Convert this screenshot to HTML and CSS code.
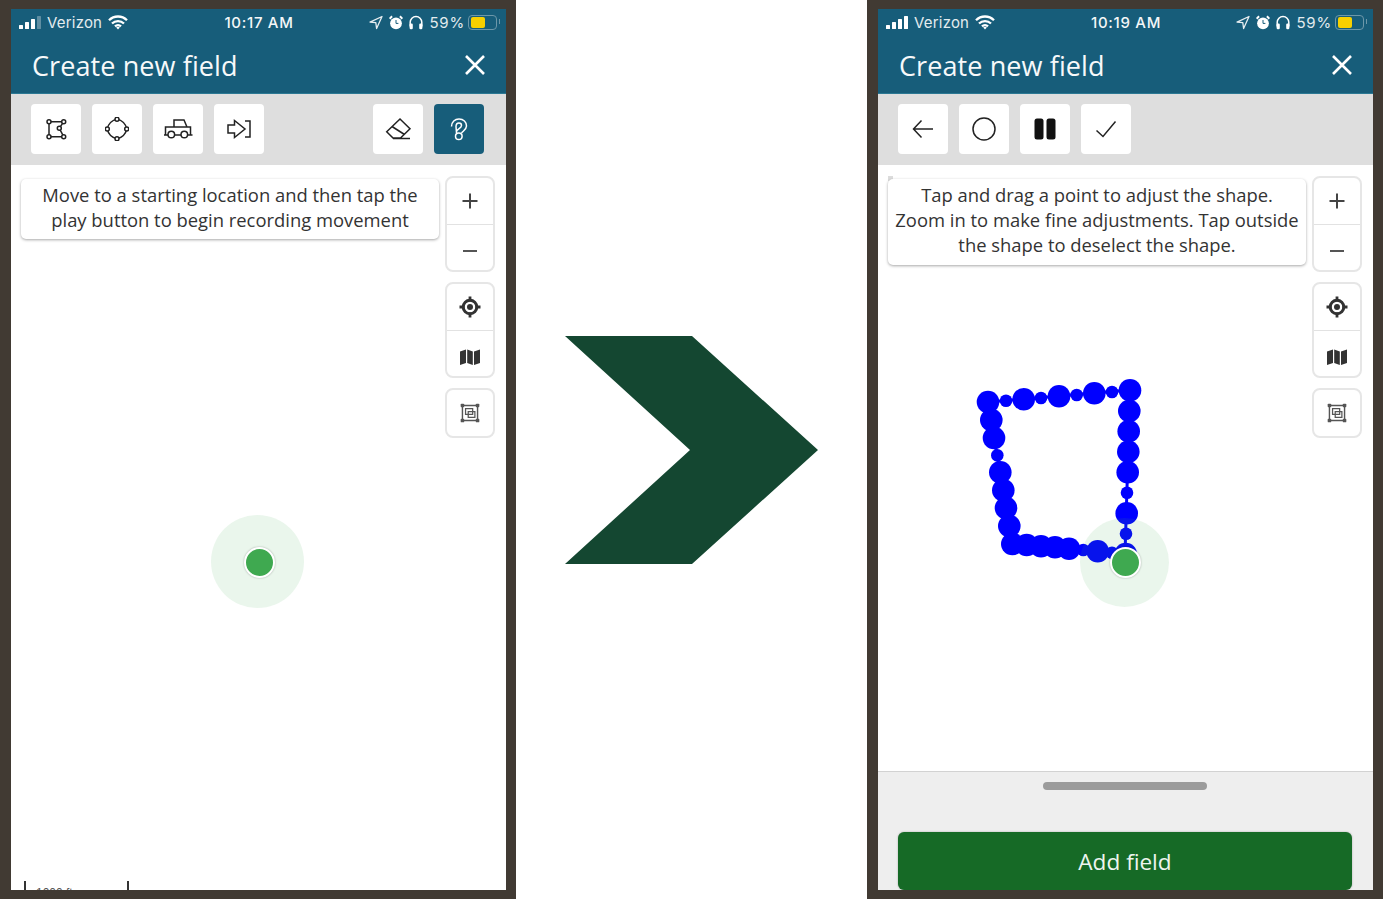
FILE: index.html
```html
<!DOCTYPE html>
<html lang="en">
<head>
<meta charset="utf-8">
<title>Create new field</title>
<link rel="stylesheet" href="styles.css">
</head>
<body>
<svg class="defs" aria-hidden="true">
  <defs>
    <symbol id="wifi" viewBox="0 0 20 15"><path d="M1 5.200a12.800 12.800 0 0 1 18 0M4 8.500a8.600 8.600 0 0 1 12 0M7 11.400a4.300 4.300 0 0 1 6 0" fill="none" stroke="#fff" stroke-width="2.300"/><path d="M8.200 12.600a2.600 2.600 0 0 1 3.600 0L10 14.600z" fill="#fff"/></symbol>
    <symbol id="nav" viewBox="0 0 14 14"><path d="M13 1 1 6.600l5.800.6.8 5.800z" fill="none" stroke="#e8eef1" stroke-width="1.300" stroke-linejoin="round"/></symbol>
    <symbol id="alarm" viewBox="0 0 14 14"><circle cx="7" cy="7.800" r="5.900" fill="#fff"/><path d="M7 4.500v3.400h2.400" fill="none" stroke="#175d7a" stroke-width="1"/><path d="M.6 3.200 3.100.8M13.400 3.200 10.900.8" stroke="#fff" stroke-width="2"/></symbol>
    <symbol id="phones" viewBox="0 0 14 14"><path d="M1.200 11V6.800a5.800 5.800 0 0 1 11.600 0V11" fill="none" stroke="#fff" stroke-width="1.500"/><rect x=".6" y="8" width="3.200" height="5.800" rx="1.300" fill="#fff"/><rect x="10.200" y="8" width="3.200" height="5.800" rx="1.300" fill="#fff"/></symbol>
    <symbol id="close" viewBox="0 0 22 22"><path d="M2 2 20 20M20 2 2 20" stroke="#fff" stroke-width="2.600" fill="none"/></symbol>
    <symbol id="plus" viewBox="-2 -2 24 24"><path d="M10 2.500v15M2.500 10h15" stroke="#444" stroke-width="2" fill="none"/></symbol>
    <symbol id="minus" viewBox="-2 -2 24 24"><path d="M3 10h14" stroke="#555" stroke-width="2" fill="none"/></symbol>
    <symbol id="locate" viewBox="0 0 24 24"><path d="M12 1.500v5M12 17.500v5M1.500 12h5M17.500 12h5" stroke="#333" stroke-width="2.800"/><circle cx="12" cy="12" r="6.800" fill="none" stroke="#333" stroke-width="3"/><circle cx="12" cy="12" r="3" fill="#333"/></symbol>
    <symbol id="map" viewBox="0 0 24 24"><path d="M2 6.500 8 4.500V18L2 20zM9.200 4.500l5.600 2V20l-5.600-2zM16 6.500l6-2V18l-6 2z" fill="#333"/></symbol>
    <symbol id="extent" viewBox="-1.500 -1.500 27 27"><path d="M3.500 3.500h17v17h-17z" fill="none" stroke="#555" stroke-width="1.600"/><path d="M7 7h8v6.500H7zM10 10.500h7.500V17H10z" fill="none" stroke="#555" stroke-width="1.400"/><g fill="#555"><rect x="1.500" y="1.500" width="4" height="4" rx="1"/><rect x="18.500" y="1.500" width="4" height="4" rx="1"/><rect x="1.500" y="18.500" width="4" height="4" rx="1"/><rect x="18.500" y="18.500" width="4" height="4" rx="1"/></g></symbol>
  </defs>
</svg>

<main class="layout">
  <section class="phone">
    <div class="screen">
      <header class="header">
        <div class="status">
          <div class="status-left">
            <span class="signal"><i></i><i></i><i></i><i class="off"></i></span>
            <span>Verizon</span>
            <svg class="wifi"><use href="#wifi"/></svg>
          </div>
          <div class="status-time">10:17 AM</div>
          <div class="status-right">
            <svg class="sys"><use href="#nav"/></svg>
            <svg class="sys"><use href="#alarm"/></svg>
            <svg class="sys"><use href="#phones"/></svg>
            <span class="pct">59%</span>
            <span class="battery"><b></b></span>
          </div>
        </div>
        <div class="titlebar">
          <h1>Create new field</h1>
          <svg class="close"><use href="#close"/></svg>
        </div>
      </header>
      <div class="toolbar">
        <button class="tool"><svg viewBox="0 0 24 24" class="ico"><path d="M5 4.700h14.700M5 4.700v15M5 19.700h14.700M19.700 4.700 15.300 11.300 19.700 19.700"/><circle cx="5" cy="4.700" r="2"/><circle cx="19.700" cy="4.700" r="2"/><circle cx="5" cy="19.700" r="2"/><circle cx="19.700" cy="19.700" r="2"/><circle cx="15.300" cy="11.300" r="2"/></svg></button>
        <button class="tool"><svg viewBox="0 0 24 24" class="ico"><path d="M2.300 12A12 12 0 0 1 12 2.300M12 2.300A12 12 0 0 1 21.700 12M21.700 12A12 12 0 0 1 12 21.700M12 21.700A12 12 0 0 1 2.300 12"/><circle cx="12" cy="2.300" r="2"/><circle cx="12" cy="21.700" r="2"/><circle cx="2.300" cy="12" r="2"/><circle cx="21.700" cy="12" r="2"/></svg></button>
        <button class="tool"><svg viewBox="0 0 30 24" class="ico wide"><path d="M1 18h4M11.500 18h6.500M24.500 18h5M2.500 18V10H11V3h10l3 7h3.500v8M11 10h13"/><circle cx="8.300" cy="17.500" r="3.300"/><circle cx="21.300" cy="17.500" r="3.300"/></svg></button>
        <button class="tool"><svg viewBox="0 0 30 24" class="ico wide"><path d="M4 8h6.500V3.500L21 12 10.500 20.500V16H4zM21 4h5v16h-5"/></svg></button>
        <span class="spacer"></span>
        <button class="tool"><svg viewBox="0 0 30 24" class="ico wide"><path d="M3.700 14.700 17 2l10 9.700-9.500 9.300H10zM9 9.500l12.500 8M10 21.500h17"/></svg></button>
        <button class="tool active"><svg viewBox="0 0 24 24" class="ico light"><path d="M4.500 9.500C4.500 5 8 2 12 2c4.500 0 7.500 3 7.500 7 0 3.500-3.500 5-5 7M9.500 16v-1.500c0-2.500 5-3 5-6C14.500 7 13.500 6 12 6s-3 1-3 3.500z"/><circle cx="11.800" cy="19.300" r="3.300"/></svg></button>
      </div>
      <div class="map">
        <div class="overlay">
          <div class="hint">Move to a starting location and then tap the play button to begin recording movement</div>
          <div class="controls">
            <div class="group"><div class="ctrl"><svg class="c-ico"><use href="#plus"/></svg></div><div class="ctrl"><svg class="c-ico"><use href="#minus"/></svg></div></div>
            <div class="group"><div class="ctrl"><svg class="c-ico"><use href="#locate"/></svg></div><div class="ctrl"><svg class="c-ico"><use href="#map"/></svg></div></div>
            <div class="group"><div class="ctrl"><svg class="c-ico"><use href="#extent"/></svg></div></div>
          </div>
        </div>
        <div class="scale"><span>1000 ft</span></div>
        <div class="halo halo-left"></div>
        <div class="dot dot-left"></div>
      </div>
    </div>
  </section>

  <div class="arrow">
    <svg viewBox="0 0 253 228" class="chevron"><path d="M0 0H127L253 114 127 228H0L125 114z"/></svg>
  </div>

  <section class="phone">
    <div class="screen">
      <header class="header">
        <div class="status">
          <div class="status-left">
            <span class="signal"><i></i><i></i><i></i><i></i></span>
            <span>Verizon</span>
            <svg class="wifi"><use href="#wifi"/></svg>
          </div>
          <div class="status-time">10:19 AM</div>
          <div class="status-right">
            <svg class="sys"><use href="#nav"/></svg>
            <svg class="sys"><use href="#alarm"/></svg>
            <svg class="sys"><use href="#phones"/></svg>
            <span class="pct">59%</span>
            <span class="battery"><b></b></span>
          </div>
        </div>
        <div class="titlebar">
          <h1>Create new field</h1>
          <svg class="close"><use href="#close"/></svg>
        </div>
      </header>
      <div class="toolbar">
        <button class="tool"><svg viewBox="0 0 24 24" class="ico"><path d="M22 12H2.500M10.500 3.500 2.500 12l8 8.500"/></svg></button>
        <button class="tool"><svg viewBox="0 0 24 24" class="ico"><circle cx="12" cy="12" r="11"/></svg></button>
        <button class="tool"><svg viewBox="0 0 24 24" class="ico fill"><rect x="1.500" y="1.500" width="9" height="21" rx="2.500"/><rect x="13.500" y="1.500" width="9" height="21" rx="2.500"/></svg></button>
        <button class="tool"><svg viewBox="0 0 24 24" class="ico"><path d="M2.500 13.500 9 19.500 21.500 4.500"/></svg></button>
      </div>
      <div class="map">
        <div class="overlay">
          <div class="hint hint-tall">Tap and drag a point to adjust the shape.<br>Zoom in to make fine adjustments. Tap outside the shape to deselect the shape.</div>
          <div class="controls">
            <div class="group"><div class="ctrl"><svg class="c-ico"><use href="#plus"/></svg></div><div class="ctrl"><svg class="c-ico"><use href="#minus"/></svg></div></div>
            <div class="group"><div class="ctrl"><svg class="c-ico"><use href="#locate"/></svg></div><div class="ctrl"><svg class="c-ico"><use href="#map"/></svg></div></div>
            <div class="group"><div class="ctrl"><svg class="c-ico"><use href="#extent"/></svg></div></div>
          </div>
        </div>
        <span class="tick"></span>
        <svg class="track" viewBox="0 0 220 250">
          <polyline class="track-line" points="28,32 170,20 165,184 52,174 28,32"/>
          <g class="pts">
            <circle cx="28" cy="32" r="11.300"/><circle cx="46" cy="30.700" r="6.300"/><circle cx="63.700" cy="29.300" r="11.300"/><circle cx="81" cy="28" r="6.300"/><circle cx="99" cy="26.300" r="11.300"/><circle cx="116.700" cy="25" r="6.300"/><circle cx="134.300" cy="23.300" r="11.300"/><circle cx="152" cy="22" r="6.300"/><circle cx="170" cy="20.300" r="11.300"/>
            <circle cx="169.300" cy="41" r="11.300"/><circle cx="168.700" cy="61.300" r="11.300"/><circle cx="168.300" cy="81.700" r="11.300"/><circle cx="167.700" cy="102.300" r="11.300"/><circle cx="167" cy="122.700" r="6.300"/><circle cx="166.700" cy="143.300" r="11.300"/><circle cx="166" cy="163.700" r="6.300"/><circle cx="165.700" cy="184" r="11.300"/>
            <circle cx="31.300" cy="50" r="11.300"/><circle cx="34" cy="68" r="11.300"/><circle cx="37.300" cy="85.300" r="6.300"/><circle cx="40.300" cy="102.300" r="11.300"/><circle cx="43.300" cy="120.300" r="11.300"/><circle cx="46" cy="138" r="11.300"/><circle cx="49.300" cy="156" r="11.300"/><circle cx="52.300" cy="174" r="11.300"/>
            <circle cx="66.700" cy="175" r="11.300"/><circle cx="81" cy="176.300" r="11.300"/><circle cx="95" cy="177.300" r="11.300"/><circle cx="109" cy="178.700" r="11.300"/><circle cx="123.300" cy="180" r="6.300"/><circle cx="137.700" cy="181.300" r="11.300"/><circle cx="152" cy="182.700" r="6.300"/>
          </g>
        </svg>
        <div class="halo halo-right"></div>
        <div class="dot dot-right"></div>
        <div class="sheet">
          <div class="handle"></div>
          <button class="add">Add field</button>
        </div>
      </div>
    </div>
  </section>
</main>
</body>
</html>
```

FILE: styles.css
```css
* { box-sizing: border-box; }
html, body { margin: 0; padding: 0; background: #fff; }
body { font-family: "Open Sans", "Noto Sans", sans-serif; color: #333; overflow: hidden; }
.defs { position: absolute; width: 0; height: 0; }

.layout { display: flex; width: 1383px; height: 900px; }
.phone { flex: 0 0 516px; height: 899px; background: #413a33; padding: 9px 10px 9px 11px; }
.screen { height: 881px; background: #fff; display: flex; flex-direction: column; overflow: hidden; }
.arrow { flex: 1; display: flex; align-items: center; justify-content: center; }
.chevron { width: 253px; height: 228px; fill: #144731; }

.header { height: 85px; background: #175d7a; color: #fff; flex: none; border-bottom: 1px solid #2b7893; }
.status { display: grid; grid-template-columns: 1fr auto 1fr; align-items: center; height: 27px; padding: 0 7px 0 8px; font-family: "Inter", "Liberation Sans", sans-serif; font-size: 15px; letter-spacing: .2px; }
.status-left { display: flex; align-items: center; gap: 6px; color: #e4ecef; }
.status-time { color: #f4f7f8; font-weight: 500; letter-spacing: .7px; }
.status-right { display: flex; align-items: center; justify-content: flex-end; gap: 6px; color: #e4ecef; }
.pct { letter-spacing: .8px; }
.signal { display: flex; align-items: flex-end; gap: 1.500px; height: 13px; }
.signal i { width: 4.375px; background: #fff; border-radius: .5px; }
.signal i:nth-child(1) { height: 4px; }
.signal i:nth-child(2) { height: 7px; }
.signal i:nth-child(3) { height: 10px; }
.signal i:nth-child(4) { height: 13px; }
.signal i.off { background: #5f8ea2; }
.wifi { width: 20px; height: 15px; }
.sys { width: 14px; height: 15px; }
.battery { position: relative; width: 29px; height: 15.500px; border: 1.500px solid #6c97a9; border-radius: 4px; padding: 1.500px; margin: 0 2px 0 -3px; }
.battery b { display: block; width: 14px; height: 100%; background: #f7d000; border-radius: 2px; }
.battery::after { content: ""; position: absolute; right: -4px; top: 3.500px; width: 1.500px; height: 5px; background: #6c97a9; }
.titlebar { display: flex; align-items: center; justify-content: space-between; height: 58px; padding: 0 20px 0 21px; }
h1 { margin: 0; font-size: 27px; font-weight: 400; letter-spacing: .1px; color: #f7f9fa; }
.close { width: 22px; height: 22px; }

.toolbar { display: flex; gap: 11px; height: 71px; flex: none; padding: 10px 22px 11px 20px; background: #dedede; }
.tool { width: 50px; height: 50px; padding: 0; border: 0; border-radius: 4px; background: #fff; display: flex; align-items: center; justify-content: center; }
.tool.active { background: #175d7a; }
.spacer { flex: 1; }
.ico { width: 24px; height: 24px; fill: none; stroke: #222; stroke-width: 1.500; }
.ico circle { fill: #fff; }
.ico.wide { width: 30px; }
.ico.fill { stroke: none; }
.ico.fill rect { fill: #111; }
.ico.light { stroke: #fff; }
.ico.light circle { fill: none; }

.map { position: relative; flex: 1; overflow: hidden; }
.overlay { display: flex; justify-content: space-between; align-items: flex-start; padding: 11px 11px 0 10px; position: relative; z-index: 2; }
.hint { width: 418px; margin-top: 3px; padding: 3px 4px 7px; background: #fff; border-radius: 5px; box-shadow: 0 1px 3px rgba(0,0,0,.35); text-align: center; font-size: 18.400px; line-height: 25px; color: #333; }
.hint-tall { padding-bottom: 8px; }
.controls { display: flex; flex-direction: column; gap: 10px; }
.group { width: 50px; background: #fff; border: 2px solid #e6e6e6; border-radius: 8px; }
.ctrl { height: 46px; display: flex; align-items: center; justify-content: center; }
.ctrl + .ctrl { border-top: 1px solid #e2e2e2; padding-top: 6px; }
.c-ico { width: 24px; height: 24px; }

.scale { position: absolute; left: 13px; bottom: 0; width: 105px; height: 9px; border: solid #333; border-width: 0 2px; font: 12px "Liberation Sans", sans-serif; color: #555; }
.scale span { position: absolute; left: 10px; top: 5px; }

.halo { position: absolute; border-radius: 50%; background: rgba(63,169,79,.11); }
.halo-left { left: 200px; top: 350px; width: 93px; height: 93px; }
.halo-right { left: 202px; top: 353px; width: 89px; height: 89px; z-index: 1; }
.dot { position: absolute; width: 31px; height: 31px; border-radius: 50%; background: #3fa950; border: 2px solid #fff; box-shadow: 0 0 2px rgba(0,0,0,.3); z-index: 1; }
.dot-left { left: 232.500px; top: 382px; }
.dot-right { left: 231.500px; top: 382px; }

.tick { position: absolute; left: 10px; top: 11px; width: 5px; height: 5px; background: #dcdcdc; }
.track { position: absolute; left: 82px; top: 205px; width: 220px; height: 250px; }
.track-line { fill: none; stroke: #00f; stroke-width: 3; }
.pts { fill: #00f; }

.sheet { position: absolute; left: 0; right: 0; bottom: 0; height: 119px; z-index: 3; padding: 10px 21px 0 20px; background: #eee; border-top: 1px solid #d2d2d2; display: flex; flex-direction: column; align-items: center; }
.handle { width: 164px; height: 8px; border-radius: 4px; background: #9b9b9b; }
.add { margin-top: 42px; width: 100%; height: 58px; padding-top: 2px; border: 0; border-radius: 6px; background: #166a26; color: #eef5ef; font-family: inherit; font-size: 22.600px; box-shadow: 0 0 2px rgba(0,0,0,.3); }
```
